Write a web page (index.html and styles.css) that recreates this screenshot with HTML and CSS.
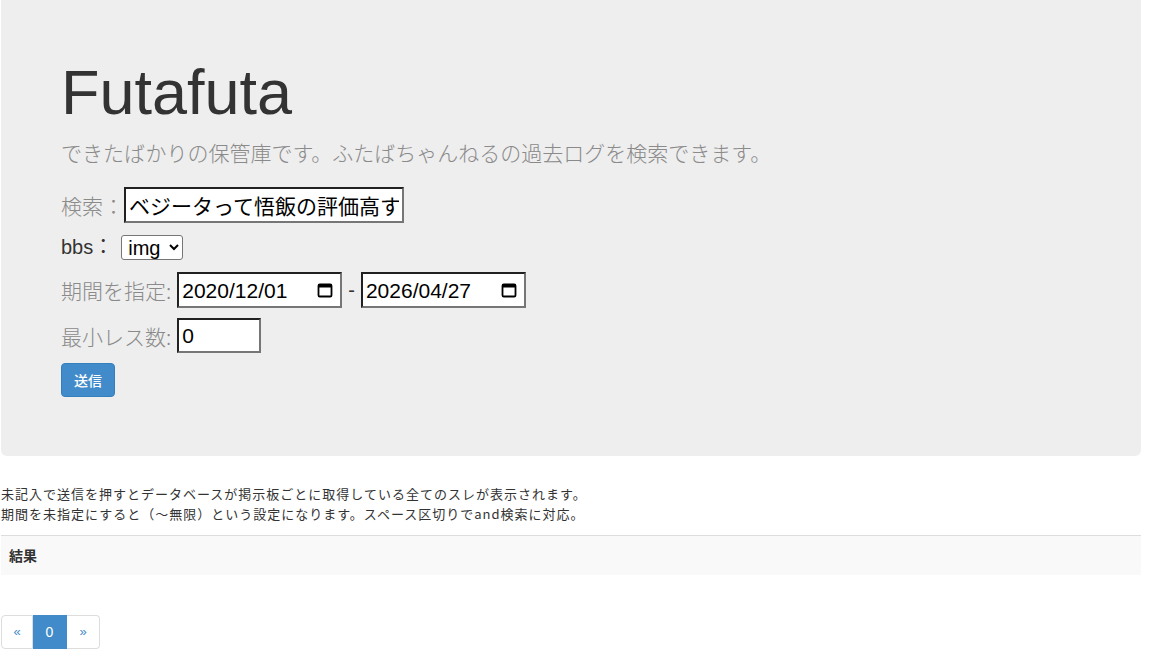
FILE: index.html
```html
<!DOCTYPE html>
<html lang="ja">
<head>
<meta charset="utf-8">
<title>Futafuta</title>
<link rel="stylesheet" href="styles.css">
</head>
<body>
<div class="page">
  <div class="jumbotron">
    <h1 class="title">Futafuta</h1>
    <p class="lead">できたばかりの保管庫です。ふたばちゃんねるの過去ログを検索できます。</p>
    <form class="search-form">
      <div class="row row-search">
        <span class="label-light">検索：</span>
        <input class="field field-search" type="text" value="ベジータって悟飯の評価高すぎだろ">
      </div>
      <div class="row row-bbs">
        <span class="label-dark">bbs：</span>
        <select class="field-select"><option>img</option></select>
      </div>
      <div class="row row-date">
        <span class="label-light label-colon">期間を指定:</span>
        <span class="field date-box"><span class="date-text">2020/12/01</span><svg class="cal" viewBox="0 0 16 16" width="16" height="16"><rect x="1.5" y="2.5" width="13" height="12" rx="1.3" fill="none" stroke="#000" stroke-width="1.8"/><rect x="1.5" y="2.5" width="13" height="3" fill="#000"/></svg></span>
        <span class="dash">-</span>
        <span class="field date-box"><span class="date-text">2026/04/27</span><svg class="cal" viewBox="0 0 16 16" width="16" height="16"><rect x="1.5" y="2.5" width="13" height="12" rx="1.3" fill="none" stroke="#000" stroke-width="1.8"/><rect x="1.5" y="2.5" width="13" height="3" fill="#000"/></svg></span>
      </div>
      <div class="row row-min">
        <span class="label-light label-colon">最小レス数:</span>
        <input class="field field-min" type="text" value="0">
      </div>
      <div class="row row-submit">
        <button class="btn-primary" type="button">送信</button>
      </div>
    </form>
  </div>

  <div class="notes">
    <p>未記入で送信を押すとデータベースが掲示板ごとに取得している全てのスレが表示されます。</p>
    <p>期間を未指定にすると（～無限）という設定になります。スペース区切りでand検索に対応。</p>
  </div>

  <div class="panel-heading">結果</div>

  <ul class="pagination">
    <li class="page-item"><span class="page-link">«</span></li>
    <li class="page-item active"><span class="page-link">0</span></li>
    <li class="page-item"><span class="page-link">»</span></li>
  </ul>
</div>
</body>
</html>
```

FILE: styles.css
```css
html, body {
  margin: 0;
  padding: 0;
  background: #fff;
}

body {
  font-family: "Liberation Sans", "Noto Sans CJK JP", sans-serif;
  color: #333;
  font-size: 14px;
  line-height: 1.42857;
}

.page {
  width: 1140px;
  margin-left: 1px;
}

.jumbotron {
  background: #eeeeee;
  border-radius: 0 0 6px 6px;
  padding: 38px 60px 59px 60px;
}

.title {
  margin: 20px 0 10px 0;
  font-family: "Liberation Sans", sans-serif;
  font-size: 63px;
  font-weight: 400;
  line-height: 69px;
  color: #333;
}

.lead {
  margin: 0;
  font-family: "Noto Sans CJK JP", sans-serif;
  font-size: 21px;
  font-weight: 300;
  line-height: 30px;
  color: #8a8a8a;
}

.search-form {
  margin-top: 20px;
}

.row {
  display: flex;
  align-items: center;
}

.row-search { height: 36px; }
.row-bbs { height: 25px; margin-top: 12px; }
.row-date { height: 36px; margin-top: 12px; }
.row-min { height: 35px; margin-top: 10px; }
.row-submit { height: 34px; margin-top: 10px; }

.label-light {
  font-family: "Noto Sans CJK JP", sans-serif;
  font-weight: 300;
  font-size: 21px;
  color: #8a8a8a;
  line-height: 30px;
}

.label-colon {
  margin-right: 6px;
}

.label-dark {
  font-family: "Liberation Sans", "Noto Sans CJK JP", sans-serif;
  font-size: 20px;
  color: #333;
  line-height: 25px;
  margin-right: 8px;
}

.field {
  box-sizing: border-box;
  background: #fff;
  border: 2px inset #767676;
  font-family: "Liberation Sans", "Noto Sans CJK JP", sans-serif;
  font-size: 21px;
  color: #000;
  padding: 1px 3px;
}

.field-search {
  width: 280px;
  height: 36px;
}

.field-min {
  width: 84px;
  height: 35px;
}

.field-select {
  box-sizing: border-box;
  width: 62px;
  height: 25px;
  font-family: "Liberation Sans", sans-serif;
  font-size: 20px;
  padding: 0 0 0 2px;
  border: 1px solid #767676;
  border-radius: 3px;
  background: #fff;
  color: #000;
}

.date-box {
  display: inline-flex;
  align-items: center;
  justify-content: space-between;
  width: 165px;
  height: 36px;
  padding: 0 7px 0 3px;
}

.date-text {
  line-height: 1;
}

.cal {
  display: block;
}

.dash {
  font-size: 20px;
  color: #333;
  margin: 0 6px 0 6px;
}

.btn-primary {
  font-family: "Noto Sans CJK JP", sans-serif;
  font-size: 14px;
  font-weight: 500;
  color: #fff;
  background: #428bca;
  border: 1px solid #357ebd;
  border-radius: 4px;
  width: 54px;
  height: 34px;
  padding: 0;
  line-height: 1;
}

.notes {
  margin-top: 28px;
  font-family: "Noto Sans CJK JP", sans-serif;
  font-size: 13px;
  letter-spacing: 1px;
  color: #333;
}

.notes p {
  margin: 0;
  line-height: 20px;
}

.panel-heading {
  margin-top: 11px;
  border-top: 1px solid #dddddd;
  background: #f9f9f9;
  height: 39px;
  line-height: 39px;
  padding-left: 8px;
  font-family: "Noto Sans CJK JP", sans-serif;
  font-weight: 700;
  font-size: 14px;
  color: #333;
}

.pagination {
  display: flex;
  list-style: none;
  margin: 40px 0 0 0;
  padding: 0;
}

.page-link {
  display: block;
  box-sizing: border-box;
  height: 34px;
  line-height: 32px;
  font-size: 13px;
  color: #428bca;
  background: #fff;
  border: 1px solid #dddddd;
  text-align: center;
}

.page-item:first-child .page-link {
  width: 32px;
  border-radius: 4px 0 0 4px;
}

.page-item:last-child .page-link {
  width: 33px;
  border-left: none;
  border-radius: 0 4px 4px 0;
}

.page-item.active .page-link {
  width: 34px;
  border-left: none;
  background: #428bca;
  border-color: #428bca;
  color: #fff;
  font-size: 14px;
}
```
